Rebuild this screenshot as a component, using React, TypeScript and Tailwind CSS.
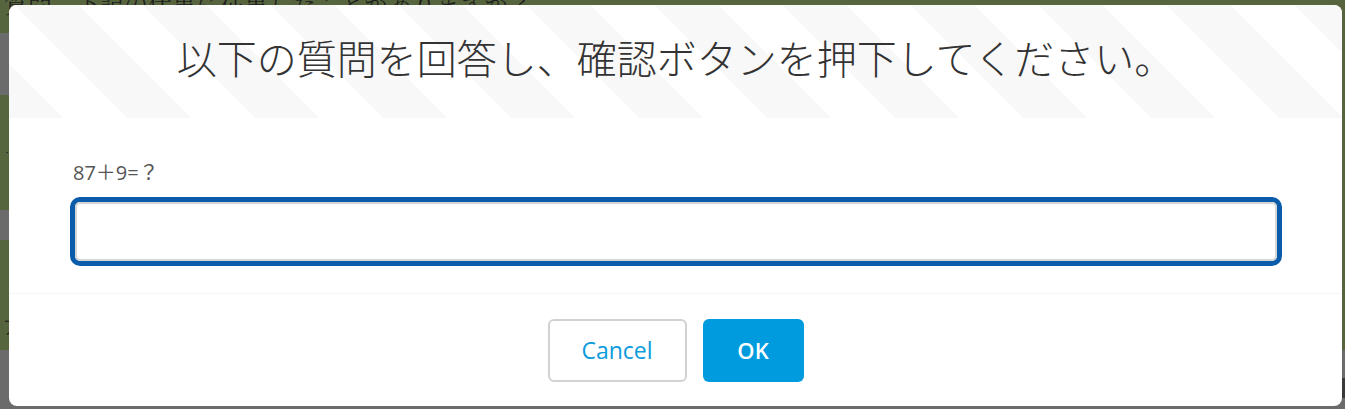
import { useState } from 'react';

const JP = { fontFamily: '"Noto Sans CJK JP", "Noto Sans", sans-serif' };
const LATIN = { fontFamily: '"Open Sans", "Noto Sans CJK JP", sans-serif' };

function Backdrop() {
  return (
    <div className="absolute inset-0 flex flex-col bg-[#57653f]">
      {/* page content behind the dialog */}
      <div className="h-[33px] overflow-hidden pl-[4px]">
        <p
          className="-mt-[11px] text-[24px] leading-[28px] text-[#1e1e1e] whitespace-nowrap"
          style={{ fontFamily: '"Noto Serif CJK JP", "Noto Sans CJK JP", serif' }}
        >
          質問　下記の仕事に従事したことがありますか？
        </p>
      </div>
      <div className="flex h-[62px]">
        <div className="w-[300px] bg-[#6b6b6b]" />
      </div>
      <div className="flex h-[115px] items-center pl-[2px]">
        <span className="text-[10px] text-[#222]">・</span>
      </div>
      <div className="flex h-[30px]">
        <div className="w-[300px] bg-[#6b6b6b]" />
      </div>
      <div className="flex h-[110px] items-end pb-[10px] pl-[3px]">
        <span className="text-[18px] text-[#222]" style={JP}>ア</span>
      </div>
      <div className="flex-1 bg-[#6b6b6b]">
        <div className="ml-auto mt-[28px] h-[20px] w-[40px] bg-[#3a3a3a]" />
      </div>
    </div>
  );
}

export default function App() {
  const [answer, setAnswer] = useState('');

  return (
    <div className="relative h-[409px] w-full overflow-hidden">
      <Backdrop />

      {/* dialog overlay */}
      <div className="absolute inset-0 pl-[9px] pr-[3px] pt-[5px] pb-[3px]">
        <div className="flex h-[401px] w-[1333px] flex-col overflow-hidden rounded-[8px] bg-white">
          {/* header */}
          <div className="flex h-[113px] items-center justify-center bg-[repeating-linear-gradient(45deg,#f8f8f8_-6.4px,#f8f8f8_38.85px,#ffffff_38.85px,#ffffff_84.1px)] pb-[9px]">
            <h2 className="text-[40px] font-light leading-none text-[#333]" style={JP}>
              以下の質問を回答し、確認ボタンを押下してください。
            </h2>
          </div>

          {/* body */}
          <div className="h-[176px] border-b border-[#f6f6f6] pl-[61px] pr-[60px] pt-[43px]">
            <label className="block h-[23px] pl-[3px] text-[20px] leading-[23px] text-[#555]" style={LATIN}>
              87＋9=？
            </label>
            <div className="mt-[13px] rounded-[10px] border-[5px] border-[#0b5bab]">
              <input
                value={answer}
                onChange={(e) => setAnswer(e.target.value)}
                className="block h-[59px] w-full rounded-[5px] border-2 border-[#d6d6d6] bg-white px-3 text-[18px] outline-none"
                style={LATIN}
              />
            </div>
          </div>

          {/* footer */}
          <div className="flex flex-1 items-start justify-center gap-[16px] pt-[25px]">
            <button
              className="h-[63px] w-[139px] rounded-[6px] border-2 border-[#d2d2d2] bg-white text-[23px] text-[#0a9bdc]"
              style={LATIN}
            >
              Cancel
            </button>
            <button
              className="h-[63px] w-[101px] rounded-[6px] bg-[#009bde] text-[22px] font-semibold text-white"
              style={LATIN}
            >
              OK
            </button>
          </div>
        </div>
      </div>
    </div>
  );
}
